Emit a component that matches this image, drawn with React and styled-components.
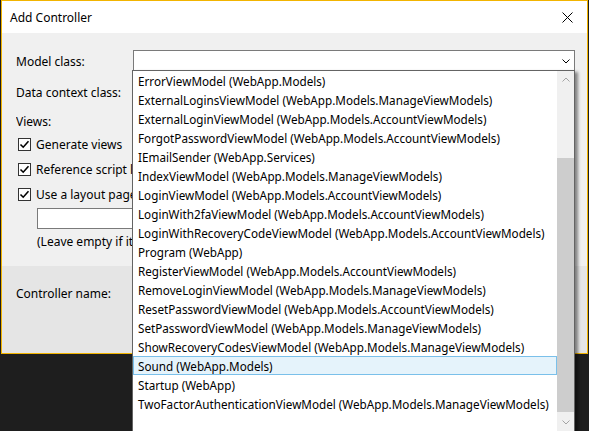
import React from "react";
import styled, { createGlobalStyle } from "styled-components";

const Global = createGlobalStyle`
  html, body { margin: 0; padding: 0; background: #1e1e1e; }
  body {
    font-family: "Noto Sans", "Open Sans", sans-serif;
    font-size: 12px;
    color: #000;
  }
`;

const Page = styled.div`
  position: relative;
  width: 589px;
  height: 431px;
  overflow: hidden;
`;

const Dialog = styled.div`
  margin-left: 1px;
  width: 587px;
  height: 354px;
  box-sizing: border-box;
  border: 1px solid #f2b400;
  display: flex;
  flex-direction: column;
  background: #f0f0f0;
`;

const TitleBar = styled.div`
  height: 32px;
  flex: none;
  background: #fff;
  display: flex;
  align-items: center;
  justify-content: space-between;
  padding: 0 14px 0 8px;
`;

const Title = styled.span`
  font-size: 12px;
`;

const Body = styled.div`
  flex: 1;
  padding: 17px 0 0 14px;
  display: flex;
  flex-direction: column;
`;

const Row = styled.div`
  display: flex;
  align-items: center;
  height: ${(p) => p.h || 22}px;
  margin-top: ${(p) => p.mt || 0}px;
`;

const LeftPane = styled.div`
  width: 117px;
  overflow: hidden;
  display: flex;
  flex-direction: column;
`;

const Label = styled.div`
  width: 117px;
  flex: none;
  white-space: nowrap;
`;

const Combo = styled.div`
  width: 442px;
  height: 22px;
  box-sizing: border-box;
  border: 1px solid #7a7a7a;
  background: #fff;
  display: flex;
  align-items: center;
  justify-content: flex-end;
  padding-right: 4px;
`;

const CheckRow = styled.div`
  display: flex;
  align-items: center;
  gap: 5px;
  height: 25px;
  padding-left: 2px;
  white-space: nowrap;
`;

const Box = styled.span`
  width: 13px;
  height: 13px;
  flex: none;
  box-sizing: border-box;
  border: 1px solid #333;
  background: #fff;
  display: flex;
  align-items: center;
  justify-content: center;
`;

const TextInput = styled.div`
  margin-left: 21px;
  margin-top: 1px;
  width: 300px;
  flex: none;
  height: 21px;
  box-sizing: border-box;
  border: 1px solid #7a7a7a;
  background: #fff;
`;

const Hint = styled.div`
  margin-left: 21px;
  height: 16px;
  margin-top: 4px;
  display: flex;
  align-items: center;
  white-space: nowrap;
`;

const Footer = styled.div`
  flex: none;
  height: 87px;
  background: #e5e5e5;
  padding: 19px 0 0 14px;
  box-sizing: border-box;
`;

const Popup = styled.div`
  position: absolute;
  left: 132px;
  top: 70px;
  width: 443px;
  height: 362px;
  box-sizing: border-box;
  border: 1px solid #646464;
  background: #fff;
  display: flex;
  box-shadow: 3px 2px 3px rgba(0, 0, 0, 0.45);
`;

const List = styled.div`
  flex: 1;
  display: flex;
  flex-direction: column;
  font-size: 11.7px;
`;

const Item = styled.div`
  height: 19px;
  flex: none;
  box-sizing: border-box;
  display: flex;
  align-items: center;
  padding-left: 4px;
  white-space: nowrap;
  border: 1px solid ${(p) => (p.sel ? "#7ac0ea" : "transparent")};
  background: ${(p) => (p.sel ? "#e5f3fb" : "transparent")};
`;

const Scrollbar = styled.div`
  width: 17px;
  flex: none;
  background: #f0f0f0;
  display: flex;
  flex-direction: column;
`;

const Arrow = styled.div`
  height: 17px;
  flex: none;
  display: flex;
  align-items: center;
  justify-content: center;
`;

const Track = styled.div`
  flex: 1;
  display: flex;
  flex-direction: column;
  padding-top: 70px;
`;

const Thumb = styled.div`
  height: 254px;
  background: #cdcdcd;
`;

const items = [
  "ErrorViewModel (WebApp.Models)",
  "ExternalLoginsViewModel (WebApp.Models.ManageViewModels)",
  "ExternalLoginViewModel (WebApp.Models.AccountViewModels)",
  "ForgotPasswordViewModel (WebApp.Models.AccountViewModels)",
  "IEmailSender (WebApp.Services)",
  "IndexViewModel (WebApp.Models.ManageViewModels)",
  "LoginViewModel (WebApp.Models.AccountViewModels)",
  "LoginWith2faViewModel (WebApp.Models.AccountViewModels)",
  "LoginWithRecoveryCodeViewModel (WebApp.Models.AccountViewModels)",
  "Program (WebApp)",
  "RegisterViewModel (WebApp.Models.AccountViewModels)",
  "RemoveLoginViewModel (WebApp.Models.ManageViewModels)",
  "ResetPasswordViewModel (WebApp.Models.AccountViewModels)",
  "SetPasswordViewModel (WebApp.Models.ManageViewModels)",
  "ShowRecoveryCodesViewModel (WebApp.Models.ManageViewModels)",
  "Sound (WebApp.Models)",
  "Startup (WebApp)",
  "TwoFactorAuthenticationViewModel (WebApp.Models.ManageViewModels)",
];

const Check = () => (
  <svg width="11" height="11" viewBox="0 0 11 11">
    <path d="M1.5 5.5 L4.2 8.2 L9.5 2.2" fill="none" stroke="#000" strokeWidth="1.6" />
  </svg>
);

const Chevron = ({ up, color = "#000" }) => (
  <svg width="8" height="5" viewBox="0 0 8 5">
    <path
      d={up ? "M0.5 4.5 L4 1 L7.5 4.5" : "M0.5 0.5 L4 4 L7.5 0.5"}
      fill="none"
      stroke={color}
      strokeWidth="1"
    />
  </svg>
);

export default function App() {
  return (
    <Page>
      <Global />
      <Dialog>
        <TitleBar>
          <Title>Add Controller</Title>
          <svg width="11" height="11" viewBox="0 0 11 11">
            <path d="M0.5 0.5 L10.5 10.5 M10.5 0.5 L0.5 10.5" stroke="#000" strokeWidth="1" />
          </svg>
        </TitleBar>
        <Body>
          <Row>
            <Label>Model class:</Label>
            <Combo>
              <Chevron />
            </Combo>
          </Row>
          <LeftPane>
            <Row mt={9}>
              <Label>Data context class:</Label>
            </Row>
            <Row mt={10} h={16}>
              <Label>Views:</Label>
            </Row>
            <CheckRow style={{ marginTop: 3 }}>
              <Box><Check /></Box>
              Generate views
            </CheckRow>
            <CheckRow>
              <Box><Check /></Box>
              Reference script libraries
            </CheckRow>
            <CheckRow>
              <Box><Check /></Box>
              Use a layout page:
            </CheckRow>
            <TextInput />
            <Hint>(Leave empty if it is set in a Razor _viewstart file)</Hint>
          </LeftPane>
        </Body>
        <Footer>
          <Label>Controller name:</Label>
        </Footer>
      </Dialog>
      <Popup>
        <List>
          {items.map((t) => (
            <Item key={t} sel={t.startsWith("Sound")}>
              {t}
            </Item>
          ))}
        </List>
        <Scrollbar>
          <Arrow>
            <Chevron up color="#a3a3a3" />
          </Arrow>
          <Track>
            <Thumb />
          </Track>
          <Arrow>
            <Chevron color="#a3a3a3" />
          </Arrow>
        </Scrollbar>
      </Popup>
    </Page>
  );
}
